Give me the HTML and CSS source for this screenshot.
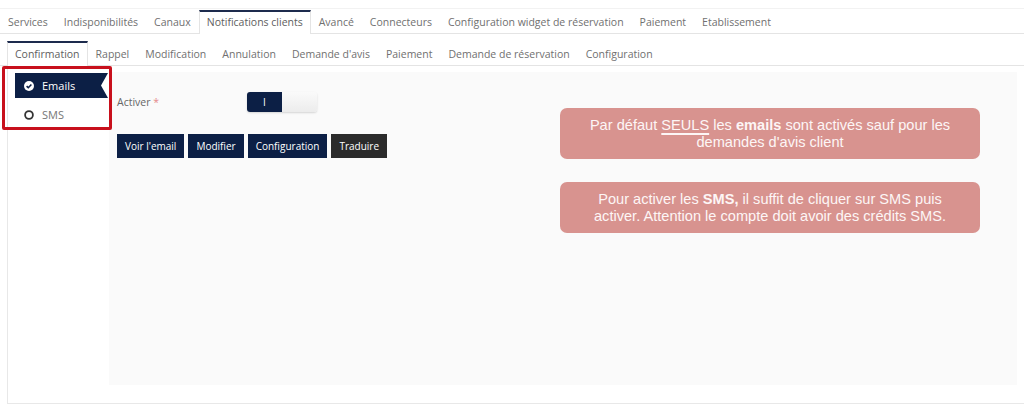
FILE: index.html
```html
<!DOCTYPE html>
<html>
    <head>
        <meta charset="utf-8">
        <title>Notifications clients</title>
        <link rel="stylesheet" href="styles.css">
    </head>
    <body>
        <div class="topbar">
            <ul class="tabs">
                <li class="tab">Services</li>
                <li class="tab">Indisponibilités</li>
                <li class="tab">Canaux</li>
                <li class="tab active">Notifications clients</li>
                <li class="tab">Avancé</li>
                <li class="tab">Connecteurs</li>
                <li class="tab">Configuration widget de réservation</li>
                <li class="tab">Paiement</li>
                <li class="tab">Etablissement</li>
            </ul>
        </div>

        <ul class="tabs subtabs">
            <li class="tab active">Confirmation</li>
            <li class="tab">Rappel</li>
            <li class="tab">Modification</li>
            <li class="tab">Annulation</li>
            <li class="tab">Demande d'avis</li>
            <li class="tab">Paiement</li>
            <li class="tab">Demande de réservation</li>
            <li class="tab">Configuration</li>
        </ul>

        <div class="panel">
            <ul class="channels">
                <li class="channel selected">
                    <svg class="ico" viewBox="0 0 10 10" width="10" height="10">
                        <circle cx="5" cy="5" r="5" fill="#fff"/>
                        <path d="M2.6 5.1 L4.3 6.7 L7.4 3.5" fill="none" stroke="#0c1f45" stroke-width="1.6"/>
                    </svg>
                    Emails
                </li>
                <li class="channel">
                    <svg class="ico" viewBox="0 0 10 10" width="10" height="10">
                        <circle cx="5" cy="5" r="3.9" fill="none" stroke="#333" stroke-width="1.8"/>
                    </svg>
                    SMS
                </li>
            </ul>
            <div class="highlight"></div>

            <div class="content">
                <div class="form">
                    <div class="row">
                        <label class="label">Activer <span class="req">*</span></label>
                        <div class="switch">
                            <span class="on">I</span>
                            <span class="off"></span>
                        </div>
                    </div>
                    <div class="actions">
                        <button class="btn">Voir l'email</button>
                        <button class="btn">Modifier</button>
                        <button class="btn">Configuration</button>
                        <button class="btn dark">Traduire</button>
                    </div>
                </div>

                <div class="notes">
                    <p class="note">Par défaut <u>SEULS</u> les <b>emails</b> sont activés sauf pour les demandes d'avis client</p>
                    <p class="note">Pour activer les <b>SMS,</b> il suffit de cliquer sur SMS puis activer. Attention le compte doit avoir des crédits SMS.</p>
                </div>
            </div>
        </div>
    </body>
</html>
```

FILE: styles.css
```css
body{
    margin: 0;
    font-family: "Open Sans", "DejaVu Sans", sans-serif;
    font-size: 10.5px;
    color: #707070;
    background: #fff;
}

ul{
    list-style: none;
    margin: 0;
    padding: 0;
}

.topbar{
    margin-top: 8px;
    border-top: 1px solid #f2f2f2;
    padding-top: 1px;
}

.tabs{
    display: flex;
    border-bottom: 1px solid #e4e4e4;
}

.tab{
    line-height: 15px;
    padding: 3px 7px 4px;
    border: 1px solid transparent;
    border-top-width: 2px;
    border-bottom: 0;
    margin-bottom: -1px;
    white-space: nowrap;
}

.tab.active{
    background: #fff;
    border-color: #e4e4e4;
    border-top-color: #1d2b4d;
    color: #606060;
}

.subtabs{
    margin-top: 7px;
    padding-left: 7px;
}

.subtabs .tab{
    padding-top: 4px;
}

/* panel under the sub tabs: channel list + settings */
.panel{
    position: relative;
    display: flex;
    margin-left: 7px;
    border-left: 1px solid #e8e8e8;
    border-bottom: 1px solid #e8e8e8;
    padding: 6px 7px 18px 0;
    height: 313px;
}

.channels{
    width: 94px;
    flex: none;
    padding-left: 7px;
    padding-top: 1px;
}

.channel{
    display: flex;
    align-items: center;
    height: 25px;
    padding-left: 9px;
    font-size: 11px;
    color: #777;
    margin-bottom: 4px;
}

.channel .ico{
    margin-right: 8px;
}

.channel.selected{
    width: 84px;
    background: #0c1f45;
    color: #fff;
    clip-path: polygon(0 0, 100% 0, calc(100% - 7px) 50%, 100% 100%, 0 100%);
}

.highlight{
    position: absolute;
    left: -6px;
    top: 0;
    width: 104px;
    height: 58px;
    border: 3px solid #c8101c;
    border-radius: 2px;
}

.content{
    flex: 1;
    display: flex;
    background: #fafafa;
    padding: 20px 0 0 8px;
}

.form{
    width: 443px;
    flex: none;
}

.row{
    display: flex;
    align-items: center;
    height: 20px;
}

.label{
    width: 130px;
    color: #666;
    font-size: 10.5px;
}

.req{
    color: #e58a8a;
}

.switch{
    display: flex;
    width: 70px;
    height: 20px;
    border-radius: 3px;
    overflow: hidden;
    box-shadow: 0 1px 2px rgba(0,0,0,0.15);
}

.switch .on{
    width: 35px;
    background: #0c1f45;
    color: #fff;
    text-align: center;
    line-height: 20px;
    font-size: 10px;
}

.switch .off{
    flex: 1;
    background: linear-gradient(#fafafa, #ececec);
}

.actions{
    display: flex;
    gap: 4px;
    margin-top: 22px;
}

.btn{
    height: 24px;
    padding: 0 8px;
    border: 0;
    background: #0c1f45;
    color: #fff;
    font-family: "Open Sans", sans-serif;
    font-size: 10px;
}

.btn.dark{
    background: #2b2b2b;
}

.notes{
    width: 420px;
    margin-top: 16px;
}

.note{
    margin: 0 0 23px;
    height: 51px;
    box-sizing: border-box;
    padding: 9px 18px 0;
    background: #d8938f;
    border-radius: 7px;
    color: #fdf6f6;
    text-align: center;
    font-family: "Liberation Sans", Arial, sans-serif;
    font-size: 14.6px;
    line-height: 17px;
}

.note u{
    text-decoration-thickness: 2px;
    text-underline-offset: 3px;
}
```
